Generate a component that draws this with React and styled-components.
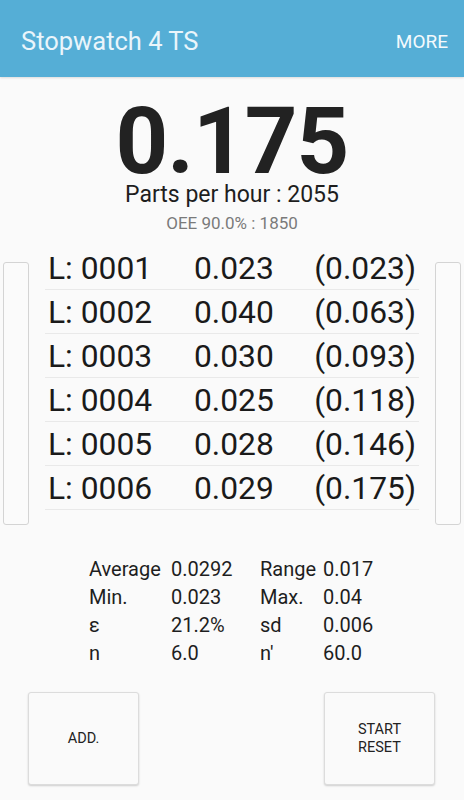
import React from 'react'
import styled, { createGlobalStyle } from 'styled-components';

const GlobalStyle = createGlobalStyle`
  html, body {
    margin: 0;
    padding: 0;
    background: #fafafa;
  }
  body {
    font-family: Roboto, "Noto Sans", sans-serif;
    color: #212121;
  }
`;

const Screen = styled.div`
  width: 464px;
  height: 800px;
  overflow: hidden;
  background: #fafafa;
`;

const TopBar = styled.div`
  height: 77px;
  box-sizing: border-box;
  display: flex;
  align-items: center;
  justify-content: space-between;
  padding: 5px 16px 0 21px;
  background-color: #55aed6;
  box-shadow: 0 1px 2px rgba(0, 0, 0, 0.12);
`;

const AppTitle = styled.div`
  font-size: 25.5px;
  color: #eaf5fb;
`;

const MoreButton = styled.div`
  font-size: 19px;
  color: #f4fafd;
`;

const Display = styled.div`
  display: flex;
  flex-direction: column;
  align-items: center;
`;

const BigTime = styled.div`
  margin-top: 22px;
  font-size: 92px;
  font-weight: 700;
  line-height: 86px;
  color: #222;
  letter-spacing: -1px;
`;

const Rate = styled.div`
  font-size: 23px;
  line-height: 20px;
  color: #1e1e1e;
`;

const Oee = styled.div`
  margin-top: 6px;
  font-size: 17px;
  line-height: 24px;
  color: #7a7a7a;
`;

const LapArea = styled.div`
  display: flex;
  align-items: flex-start;
  padding: 0 3px;
  margin-top: 11px;
  gap: 16px;
`;

const SideBar = styled.div`
  width: 26px;
  height: 263px;
  margin-top: 16px;
  box-sizing: border-box;
  border: 1px solid #d4d4d4;
  border-radius: 3px;
  background: #fbfbfb;
  flex-shrink: 0;
`;

const LapList = styled.div`
  flex: 1;
`;

const LapRow = styled.div`
  display: grid;
  grid-template-columns: 146px 1fr auto;
  align-items: center;
  height: 44px;
  box-sizing: border-box;
  padding: 0 3px 0 3px;
  border-bottom: 1px solid #e9e9e9;
  font-size: 31.8px;
  color: #1a1a1a;
`;

const Stats = styled.div`
  display: grid;
  grid-template-columns: 82px 89px 63px auto;
  margin: 30px 0 0 89px;
  font-size: 20px;
  line-height: 28px;
  color: #1e1e1e;
`;

const Controls = styled.div`
  display: flex;
  justify-content: space-between;
  padding: 0 29px 0 28px;
  margin-top: 25px;
`;

const ActionButton = styled.div`
  width: 111px;
  height: 93px;
  box-sizing: border-box;
  display: flex;
  align-items: center;
  justify-content: center;
  text-align: center;
  font-size: 14.5px;
  line-height: 18px;
  color: #222;
  background: #fafafa;
  border: 1px solid #dcdcdc;
  border-radius: 3px;
  box-shadow: 0 1px 2px rgba(0, 0, 0, 0.18);
`;

const laps = [
  ['L: 0001', '0.023', '(0.023)'],
  ['L: 0002', '0.040', '(0.063)'],
  ['L: 0003', '0.030', '(0.093)'],
  ['L: 0004', '0.025', '(0.118)'],
  ['L: 0005', '0.028', '(0.146)'],
  ['L: 0006', '0.029', '(0.175)'],
];

const stats = [
  ['Average', '0.0292', 'Range', '0.017'],
  ['Min.', '0.023', 'Max.', '0.04'],
  ['ε', '21.2%', 'sd', '0.006'],
  ['n', '6.0', "n'", '60.0'],
];

export default function App() {
  return (
    <Screen>
      <GlobalStyle />
      <TopBar>
        <AppTitle>Stopwatch 4 TS</AppTitle>
        <MoreButton>MORE</MoreButton>
      </TopBar>
      <Display>
        <BigTime>0.175</BigTime>
        <Rate>Parts per hour : 2055</Rate>
        <Oee>OEE 90.0% : 1850</Oee>
      </Display>
      <LapArea>
        <SideBar />
        <LapList>
          {laps.map((lap) => (
            <LapRow key={lap[0]}>
              <span>{lap[0]}</span>
              <span>{lap[1]}</span>
              <span>{lap[2]}</span>
            </LapRow>
          ))}
        </LapList>
        <SideBar />
      </LapArea>
      <Stats>
        {stats.flat().map((cell, i) => (
          <span key={i}>{cell}</span>
        ))}
      </Stats>
      <Controls>
        <ActionButton>ADD.</ActionButton>
        <ActionButton>START<br />RESET</ActionButton>
      </Controls>
    </Screen>
  )
}
